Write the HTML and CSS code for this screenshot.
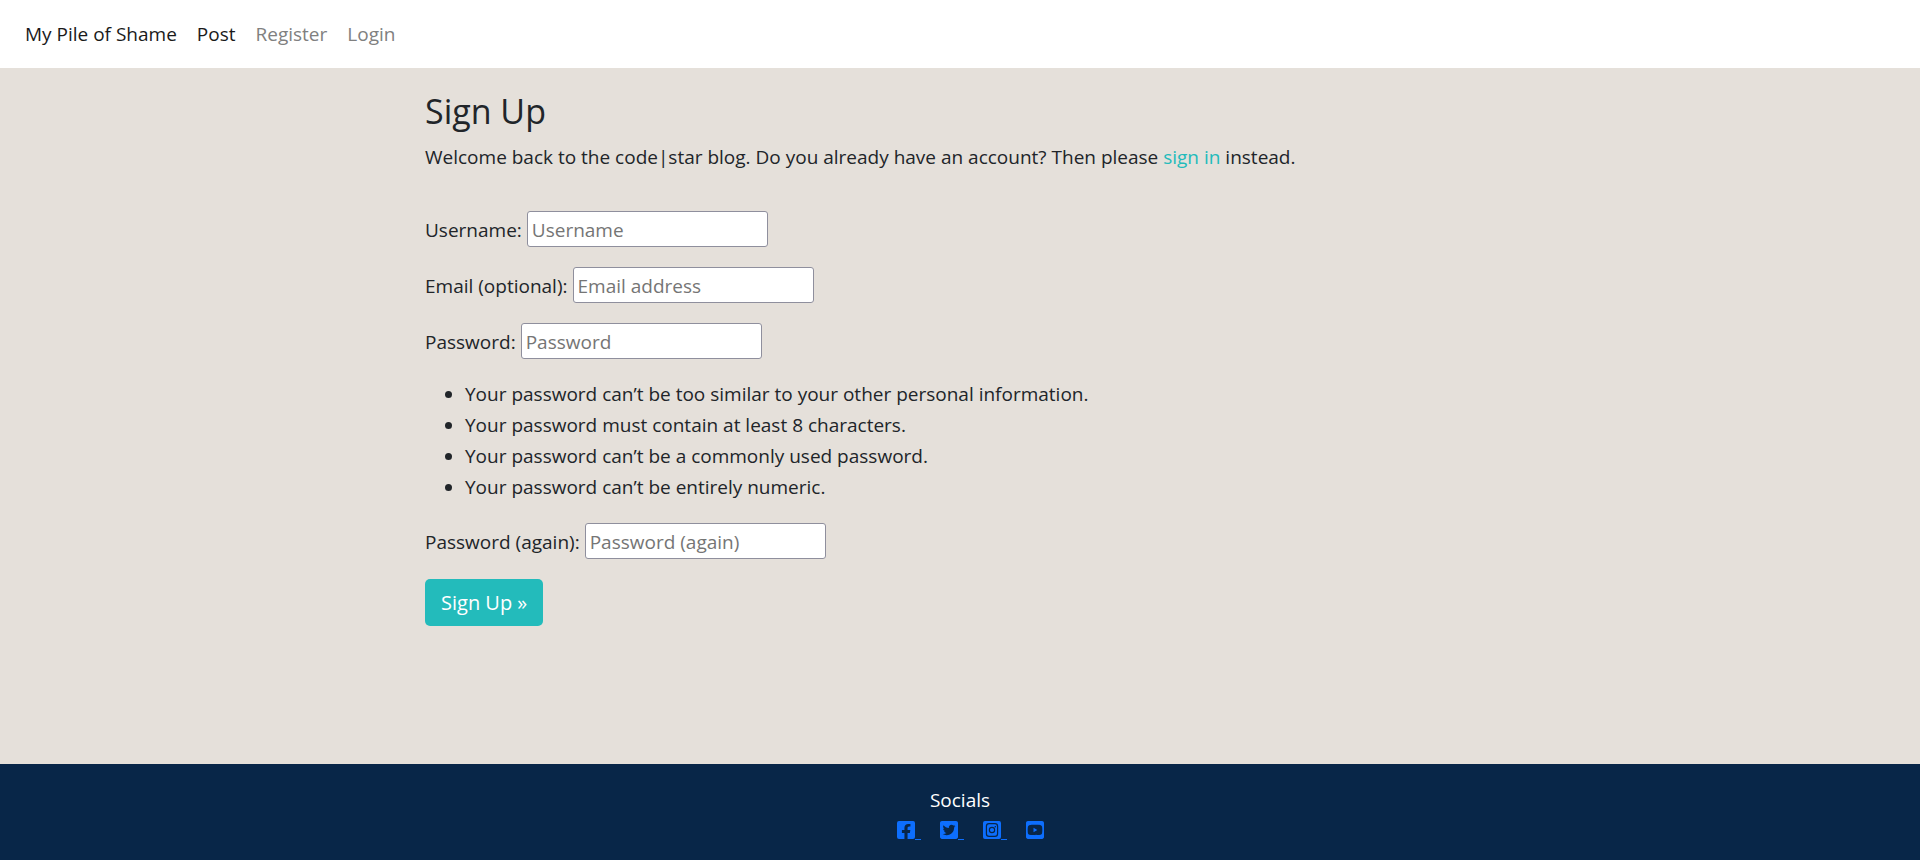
FILE: index.html
```html
<!DOCTYPE html>
<html lang="en">
<head>
<meta charset="utf-8">
<meta name="viewport" content="width=device-width, initial-scale=1">
<title>Sign Up - My Pile of Shame</title>
<link rel="stylesheet" href="styles.css">
</head>
<body>
<header class="navbar">
  <nav class="nav" aria-label="Main">
    <a class="nav-link nav-link-strong" href="#home">My Pile of Shame</a>
    <a class="nav-link nav-link-strong" href="#post">Post</a>
    <a class="nav-link" href="#register">Register</a>
    <a class="nav-link" href="#login">Login</a>
  </nav>
</header>
<main class="main">
  <div class="container">
    <h1 class="title">Sign Up</h1>
    <p class="intro">Welcome back to the code|star blog. Do you already have an account? Then please <a class="link" href="#login">sign in</a> instead.</p>
    <form class="signup">
      <div class="field">
        <label for="username">Username:</label>
        <input class="input" id="username" type="text" placeholder="Username">
      </div>
      <div class="field">
        <label for="email">Email (optional):</label>
        <input class="input" id="email" type="email" placeholder="Email address">
      </div>
      <div class="field">
        <label for="password1">Password:</label>
        <input class="input" id="password1" type="password" placeholder="Password">
      </div>
      <ul class="hints">
        <li>Your password can’t be too similar to your other personal information.</li>
        <li>Your password must contain at least 8 characters.</li>
        <li>Your password can’t be a commonly used password.</li>
        <li>Your password can’t be entirely numeric.</li>
      </ul>
      <div class="field">
        <label for="password2">Password (again):</label>
        <input class="input" id="password2" type="password" placeholder="Password (again)">
      </div>
      <button class="button" type="submit">Sign Up »</button>
    </form>
  </div>
</main>
<footer class="footer">
  <p class="footer-title">Socials</p>
  <div class="socials">
    <a class="social social-lined" href="#facebook" aria-label="Facebook"><svg class="icon" viewBox="0 32 448 448"><path d="M400 32H48A48 48 0 0 0 0 80v352a48 48 0 0 0 48 48h137.25V327.69h-63V256h63v-54.64c0-62.15 37-96.48 93.67-96.48 27.14 0 55.52 4.84 55.52 4.84v61h-31.27c-30.81 0-40.42 19.12-40.42 38.73V256h68.78l-11 71.69h-57.78V480H400a48 48 0 0 0 48-48V80a48 48 0 0 0-48-48z"/></svg></a>
    <a class="social social-lined" href="#twitter" aria-label="Twitter"><svg class="icon" viewBox="0 32 448 448"><path d="M400 32H48C21.500 32 0 53.500 0 80v352c0 26.500 21.500 48 48 48h352c26.500 0 48-21.500 48-48V80c0-26.500-21.500-48-48-48zm-48.900 158.800c.2 2.800.2 5.700.2 8.500 0 86.700-66 186.600-186.600 186.600-37.200 0-71.700-10.800-100.700-29.400 5.300.6 10.400.8 15.800.8 30.700 0 58.900-10.400 81.400-28-28.800-.6-53-19.500-61.300-45.500 10.100 1.500 19.200 1.500 29.600-1.200-30-6.100-52.500-32.500-52.500-64.400v-.8c8.700 4.900 18.900 7.900 29.600 8.300a65.447 65.447 0 0 1-29.200-54.600c0-12.200 3.200-23.400 8.900-33.100 32.300 39.800 80.800 65.800 135.200 68.600-9.300-44.500 24-80.600 64-80.600 18.900 0 35.900 7.900 47.900 20.700 14.800-2.800 29-8.300 41.600-15.800-4.900 15.200-15.200 28-28.800 36.100 13.200-1.400 26-5.100 37.800-10.200-8.900 13.100-20.100 24.700-32.900 34z"/></svg></a>
    <a class="social social-lined" href="#instagram" aria-label="Instagram"><svg class="icon" viewBox="0 32 448 448"><path fill-rule="evenodd" d="M48 32h352a48 48 0 0 1 48 48v352a48 48 0 0 1-48 48H48a48 48 0 0 1-48-48V80a48 48 0 0 1 48-48zM150 82a80 80 0 0 0-80 80v188a80 80 0 0 0 80 80h148a80 80 0 0 0 80-80V162a80 80 0 0 0-80-80zM150 112h148a50 50 0 0 1 50 50v188a50 50 0 0 1-50 50H150a50 50 0 0 1-50-50V162a50 50 0 0 1 50-50zM224 176a80 80 0 1 0 0 160a80 80 0 1 0 0-160zM224 204a52 52 0 1 1 0 104a52 52 0 1 1 0-104zM306 155a19 19 0 1 0 0 38a19 19 0 1 0 0-38z"/></svg></a>
    <a class="social" href="#youtube" aria-label="YouTube"><svg class="icon" viewBox="0 32 448 448"><path d="M186.800 202.100l95.200 54.100-95.200 54.100V202.100zM448 80v352c0 26.500-21.500 48-48 48H48c-26.500 0-48-21.500-48-48V80c0-26.500 21.500-48 48-48h352c26.500 0 48 21.500 48 48zm-42 176.300s0-59.600-7.600-88.200c-4.200-15.800-16.500-28.200-32.200-32.400C337.900 128 224 128 224 128s-113.900 0-142.200 7.700c-15.700 4.200-28 16.600-32.200 32.400-7.600 28.500-7.600 88.200-7.600 88.200s0 59.600 7.600 88.200c4.200 15.800 16.500 27.700 32.200 31.900C110.100 384 224 384 224 384s113.900 0 142.200-7.700c15.700-4.200 28-16.100 32.200-31.900 7.600-28.500 7.600-88.100 7.600-88.100z"/></svg></a>
  </div>
</footer>
</body>
</html>
```
FILE: styles.css
```css
*,
*::before,
*::after {
  box-sizing: border-box;
}

body {
  margin: 0;
  min-height: 100vh;
  display: flex;
  flex-direction: column;
  background: #e5e0da;
  color: #212529;
  font-family: "Segoe UI", "Open Sans", "Noto Sans", sans-serif;
  font-size: 19px;
  line-height: 31px;
}

.navbar {
  padding: 11px 15px 10px;
  background: #fff;
}

.nav {
  display: flex;
  flex-wrap: wrap;
}

.nav-link {
  padding: 8px 10px;
  color: #808080;
  text-decoration: none;
}

.nav-link-strong {
  color: #1a1a1a;
}

.main {
  flex: 1;
  padding: 22px 20px 20px;
}

.container {
  max-width: 1070px;
  margin: 0 auto;
}

.title {
  margin: 0 0 10px;
  font-size: 34px;
  font-weight: 400;
  line-height: 42px;
}

.intro {
  margin: 0 0 38px;
}

.link {
  color: #23bbbb;
  text-decoration: none;
}

.field {
  display: flex;
  align-items: baseline;
  flex-wrap: wrap;
  gap: 5px;
  margin-bottom: 20px;
}

.input {
  width: 241px;
  height: 36px;
  padding: 2px 4px 0;
  border: 1px solid #8f8f9d;
  border-radius: 3px;
  background: #fff;
  color: inherit;
  font: inherit;
}

.input::placeholder {
  color: #757575;
  opacity: 1;
}

.hints {
  margin: 0 0 20px;
  padding-left: 40px;
}

.button {
  padding: 8px 16px;
  border: 0;
  border-radius: 5px;
  background: #23bbbb;
  color: #fff;
  font: inherit;
  font-size: 20px;
}

.footer {
  padding: 21px 20px;
  background: #082648;
  color: #fff;
  text-align: center;
}

.footer-title {
  margin: 0 0 5px;
}

.socials {
  display: flex;
  justify-content: center;
  gap: 19px;
  padding-left: 20px;
}

.social {
  display: flex;
  color: #0d6efd;
}

.social-lined::after {
  content: "";
  width: 6px;
  margin-bottom: -1px;
  border-bottom: 1px solid;
}

.icon {
  width: 18px;
  height: 18px;
  fill: currentColor;
}
```
